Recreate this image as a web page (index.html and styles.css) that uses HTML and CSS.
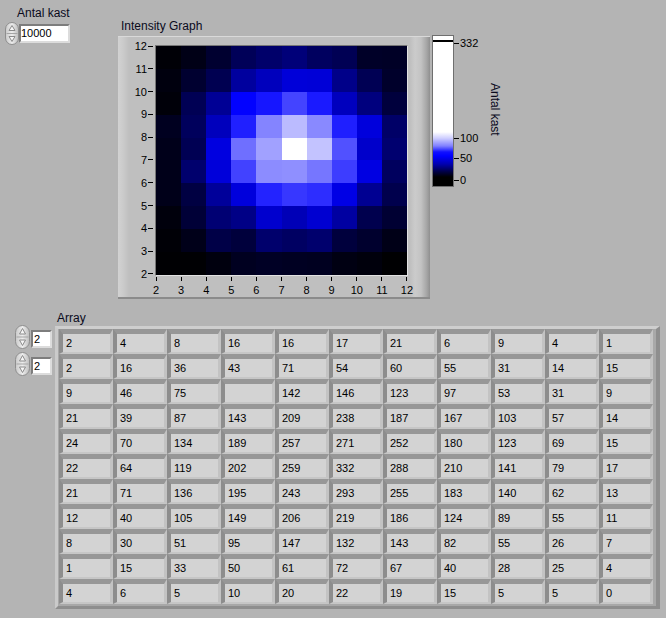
FILE: index.html
```html
<!DOCTYPE html>
<html>
<head>
<meta charset="utf-8">
<title>Intensity Graph</title>
<link rel="stylesheet" href="styles.css">
</head>
<body>
<div class="panel">
  <div class="top">
    <div class="antal">
      <div class="label antal-label">Antal kast</div>
      <div class="numctl">
        <svg class="spin" width="14" height="23" viewBox="0 0 14 23">
          <defs><linearGradient id="sg1" x1="0" x2="1"><stop offset="0" stop-color="#c9c9c9"/><stop offset="0.5" stop-color="#ededed"/><stop offset="1" stop-color="#bcbcbc"/></linearGradient></defs>
          <rect x="0.5" y="0.5" width="13" height="22" rx="6.5" fill="url(#sg1)" stroke="#8e8e8e"/>
          <line x1="1.5" y1="11.5" x2="12.5" y2="11.5" stroke="#a5a5a5"/>
          <path d="M7 3.5 L10 8.5 L4 8.5 Z" fill="#f6f6f6" stroke="#8a8a8a"/>
          <path d="M7 19.5 L10 14.5 L4 14.5 Z" fill="#f6f6f6" stroke="#8a8a8a"/>
        </svg>
        <div class="numbox wide">10000</div>
      </div>
    </div>

    <div class="graph-block">
      <div class="label graph-label">Intensity Graph</div>
      <div class="graph-frame">
        <div class="yaxis">
          <div class="yt"><span>12</span><i></i></div>
          <div class="yt"><span>11</span><i></i></div>
          <div class="yt"><span>10</span><i></i></div>
          <div class="yt"><span>9</span><i></i></div>
          <div class="yt"><span>8</span><i></i></div>
          <div class="yt"><span>7</span><i></i></div>
          <div class="yt"><span>6</span><i></i></div>
          <div class="yt"><span>5</span><i></i></div>
          <div class="yt"><span>4</span><i></i></div>
          <div class="yt"><span>3</span><i></i></div>
          <div class="yt"><span>2</span><i></i></div>
        </div>
        <div class="plot" id="plot"></div>
        <div class="xaxis">
          <div class="xt"><i></i><span>2</span></div>
          <div class="xt"><i></i><span>3</span></div>
          <div class="xt"><i></i><span>4</span></div>
          <div class="xt"><i></i><span>5</span></div>
          <div class="xt"><i></i><span>6</span></div>
          <div class="xt"><i></i><span>7</span></div>
          <div class="xt"><i></i><span>8</span></div>
          <div class="xt"><i></i><span>9</span></div>
          <div class="xt"><i></i><span>10</span></div>
          <div class="xt"><i></i><span>11</span></div>
          <div class="xt"><i></i><span>12</span></div>
        </div>
      </div>
    </div>

    <div class="ramp-block">
      <div class="ramp-bar"></div>
      <div class="ramp-scale">
        <div class="rt r332"><i></i><span>332</span></div>
        <div class="rt r100"><i></i><span>100</span></div>
        <div class="rt r50"><i></i><span>50</span></div>
        <div class="rt r0"><i></i><span>0</span></div>
      </div>
      <div class="ramp-title">Antal kast</div>
    </div>
  </div>

  <div class="array-section">
    <div class="indices">
      <div class="idx">
        <svg class="spin" width="15" height="24" viewBox="0 0 15 24">
          <defs><linearGradient id="sg2" x1="0" x2="1"><stop offset="0" stop-color="#c9c9c9"/><stop offset="0.5" stop-color="#ededed"/><stop offset="1" stop-color="#bcbcbc"/></linearGradient></defs>
          <rect x="0.5" y="0.5" width="14" height="23" rx="7" fill="url(#sg2)" stroke="#8e8e8e"/>
          <line x1="1.5" y1="12" x2="13.5" y2="12" stroke="#a5a5a5"/>
          <path d="M7.5 3.5 L10.5 9 L4.5 9 Z" fill="#f6f6f6" stroke="#8a8a8a"/>
          <path d="M7.5 20.5 L10.5 15 L4.5 15 Z" fill="#f6f6f6" stroke="#8a8a8a"/>
        </svg>
        <div class="numbox small">2</div>
      </div>
      <div class="idx">
        <svg class="spin" width="15" height="24" viewBox="0 0 15 24">
          <defs><linearGradient id="sg3" x1="0" x2="1"><stop offset="0" stop-color="#c9c9c9"/><stop offset="0.5" stop-color="#ededed"/><stop offset="1" stop-color="#bcbcbc"/></linearGradient></defs>
          <rect x="0.5" y="0.5" width="14" height="23" rx="7" fill="url(#sg3)" stroke="#8e8e8e"/>
          <line x1="1.5" y1="12" x2="13.5" y2="12" stroke="#a5a5a5"/>
          <path d="M7.5 3.5 L10.5 9 L4.5 9 Z" fill="#f6f6f6" stroke="#8a8a8a"/>
          <path d="M7.5 20.5 L10.5 15 L4.5 15 Z" fill="#f6f6f6" stroke="#8a8a8a"/>
        </svg>
        <div class="numbox small">2</div>
      </div>
    </div>
    <div class="array-main">
      <div class="label array-label">Array</div>
      <div class="array-frame">
        <div class="grid" id="grid">
          <div class="cell">2</div><div class="cell">4</div><div class="cell">8</div><div class="cell">16</div><div class="cell">16</div><div class="cell">17</div><div class="cell">21</div><div class="cell">6</div><div class="cell">9</div><div class="cell">4</div><div class="cell">1</div>
          <div class="cell">2</div><div class="cell">16</div><div class="cell">36</div><div class="cell">43</div><div class="cell">71</div><div class="cell">54</div><div class="cell">60</div><div class="cell">55</div><div class="cell">31</div><div class="cell">14</div><div class="cell">15</div>
          <div class="cell">9</div><div class="cell">46</div><div class="cell">75</div><div class="cell" data-v="100"></div><div class="cell">142</div><div class="cell">146</div><div class="cell">123</div><div class="cell">97</div><div class="cell">53</div><div class="cell">31</div><div class="cell">9</div>
          <div class="cell">21</div><div class="cell">39</div><div class="cell">87</div><div class="cell">143</div><div class="cell">209</div><div class="cell">238</div><div class="cell">187</div><div class="cell">167</div><div class="cell">103</div><div class="cell">57</div><div class="cell">14</div>
          <div class="cell">24</div><div class="cell">70</div><div class="cell">134</div><div class="cell">189</div><div class="cell">257</div><div class="cell">271</div><div class="cell">252</div><div class="cell">180</div><div class="cell">123</div><div class="cell">69</div><div class="cell">15</div>
          <div class="cell">22</div><div class="cell">64</div><div class="cell">119</div><div class="cell">202</div><div class="cell">259</div><div class="cell">332</div><div class="cell">288</div><div class="cell">210</div><div class="cell">141</div><div class="cell">79</div><div class="cell">17</div>
          <div class="cell">21</div><div class="cell">71</div><div class="cell">136</div><div class="cell">195</div><div class="cell">243</div><div class="cell">293</div><div class="cell">255</div><div class="cell">183</div><div class="cell">140</div><div class="cell">62</div><div class="cell">13</div>
          <div class="cell">12</div><div class="cell">40</div><div class="cell">105</div><div class="cell">149</div><div class="cell">206</div><div class="cell">219</div><div class="cell">186</div><div class="cell">124</div><div class="cell">89</div><div class="cell">55</div><div class="cell">11</div>
          <div class="cell">8</div><div class="cell">30</div><div class="cell">51</div><div class="cell">95</div><div class="cell">147</div><div class="cell">132</div><div class="cell">143</div><div class="cell">82</div><div class="cell">55</div><div class="cell">26</div><div class="cell">7</div>
          <div class="cell">1</div><div class="cell">15</div><div class="cell">33</div><div class="cell">50</div><div class="cell">61</div><div class="cell">72</div><div class="cell">67</div><div class="cell">40</div><div class="cell">28</div><div class="cell">25</div><div class="cell">4</div>
          <div class="cell">4</div><div class="cell">6</div><div class="cell">5</div><div class="cell">10</div><div class="cell">20</div><div class="cell">22</div><div class="cell">19</div><div class="cell">15</div><div class="cell">5</div><div class="cell">5</div><div class="cell">0</div>
        </div>
      </div>
    </div>
  </div>
</div>
<script src="script.js"></script>
</body>
</html>
```

FILE: styles.css
```css
* { box-sizing: border-box; margin: 0; padding: 0; }
html, body { margin: 0; background: #b4b4b4; }
body {
  font-family: "Liberation Sans", Arial, sans-serif;
  font-size: 12px;
  color: #000;
}
.panel { width: 666px; height: 618px; overflow: hidden; background: #b4b4b4; }

.label { font-size: 12px; line-height: 14px; height: 14px; white-space: nowrap; color: #0a0a1c; }

.top { display: flex; align-items: flex-start; height: 299px; }

/* Antal kast numeric control */
.antal { padding: 6px 0 0 5px; width: 70px; flex: none; }
.antal-label { padding-left: 12px; }
.numctl { display: flex; align-items: flex-start; margin-top: 2px; }
.spin { display: block; flex: none; }
.numbox {
  background: #fff;
  border: 2px solid;
  border-color: #7d7d7d #dcdcdc #dcdcdc #7d7d7d;
  font-size: 11px;
  line-height: 15px;
  padding-left: 1px;
  white-space: nowrap;
  color: #000;
}
.numbox.wide { width: 51px; height: 19px; margin-top: 2px; padding-left: 0; }

/* Intensity graph */
.graph-block { margin-left: 48px; padding-top: 19px; flex: none; }
.graph-label { padding-left: 3px; }
.graph-frame {
  margin-top: 3px;
  width: 312px;
  height: 263px;
  display: grid;
  grid-template-columns: 37px 253px;
  grid-template-rows: 231px 1fr;
  padding-top: 8px;
  border-top: 1px solid #d9d9d9;
  border-bottom: 2px solid #8b8b8b;
  background: linear-gradient(to right, #d2d2d2 0, #cbcbcb 5px, #bfbfbf 11px, #bfbfbf 292px, #cbcbcb 297px, #c3c3c3 303px, #a4a4a4 309px, #8f8f8f 312px);
}
.yaxis {
  grid-column: 1; grid-row: 1;
  align-self: start;
  margin-top: -6px;
  height: 242px;
  display: flex; flex-direction: column; justify-content: space-between;
}
.yt { height: 14px; display: flex; align-items: center; justify-content: flex-end; font-size: 11px; line-height: 14px; }
.yt i { display: block; width: 5px; height: 1px; background: #000; margin: 0 2px 0 1px; }
.plot {
  grid-column: 2; grid-row: 1;
  border: 1px solid;
  border-color: #777 #e2e2e2 #e2e2e2 #777;
  display: grid;
  grid-template-columns: repeat(10, 1fr);
  grid-template-rows: repeat(10, 1fr);
  background: #000;
}
.xaxis {
  grid-column: 2; grid-row: 2;
  justify-self: start; align-self: start;
  margin-left: -11.5px;
  width: 276px;
  display: grid;
  grid-template-columns: repeat(11, 1fr);
}
.xt { display: flex; flex-direction: column; align-items: center; font-size: 11px; line-height: 14px; }
.xt i { display: block; width: 1px; height: 4px; background: #000; margin: 1px 0 2px; }

/* Color ramp */
.ramp-block { display: flex; align-items: flex-start; margin-left: 2px; padding-top: 35px; flex: none; }
.ramp-bar {
  width: 22px; height: 152px;
  border: 1px solid #6f6f6f;
  background: linear-gradient(to bottom,
    #fff 0, #fff 4px, #000 4px, #000 6px, #fff 6px, #fff 96px,
    #d0d0ff 102px, #8080ff 110px, #1010ff 116px, #0000ff 120px,
    #0000b0 128px, #000040 136px, #000 141px, #000 100%);
}
.ramp-scale { display: flex; flex-direction: column; width: 26px; }
.rt { height: 14px; display: flex; align-items: center; font-size: 11px; line-height: 14px; }
.rt i { display: block; width: 5px; height: 1px; background: #000; margin-right: 1px; }
.r332 { margin-top: 1px; }
.r100 { margin-top: 81px; }
.r50 { margin-top: 6px; }
.r0 { margin-top: 8px; }
.ramp-title {
  writing-mode: vertical-rl;
  margin-left: 8px;
  margin-top: 48px;
  font-size: 12px;
  line-height: 14px;
  white-space: nowrap;
  color: #0a0a1c;
}

/* Array */
.array-section { display: flex; align-items: flex-start; padding-top: 12px; }
.indices { margin-left: 15px; width: 37px; padding-top: 14px; display: flex; flex-direction: column; gap: 3px; flex: none; }
.idx { display: flex; align-items: flex-end; height: 24px; }
.numbox.small { width: 21px; height: 18px; margin-bottom: 1px; margin-left: 1px; line-height: 14px; }
.array-main { margin-left: 3px; }
.array-label { padding-left: 2px; }
.array-frame {
  margin-top: 1px;
  width: 605px; height: 283px;
  border-style: solid;
  border-width: 3px 4px 3px 3px;
  border-color: #cecece #8e8e8e #8e8e8e #cacaca;
  padding: 0 3px 2px 1px;
  background: #a8a8a8;
}
.grid { display: grid; grid-template-columns: repeat(11, 54px); grid-auto-rows: 25px; }
.cell {
  border-style: solid;
  border-width: 5px 3px 2px 4px;
  border-color: #979797 #c3c3c3 #c6c6c6 #8d8d8d;
  background: #d3d3d3;
  font-size: 11px;
  line-height: 18px;
  padding-left: 3px;
  white-space: nowrap;
  overflow: hidden;
  color: #000;
}
.px { min-width: 0; min-height: 0; }
```

FILE: script.js
```js
(function () {
  var cells = document.querySelectorAll('#grid .cell');
  function val(r, c) {
    var el = cells[(r - 2) * 11 + (c - 2)];
    var t = el.getAttribute('data-v') || el.textContent;
    return parseFloat(t) || 0;
  }
  function color(v) {
    if (v <= 166) {
      return 'rgb(0,0,' + Math.round(v / 166 * 255) + ')';
    }
    var w = Math.min(255, Math.round((v - 166) / 166 * 255));
    return 'rgb(' + w + ',' + w + ',255)';
  }
  var plot = document.getElementById('plot');
  for (var y = 11; y >= 2; y--) {
    for (var x = 2; x <= 11; x++) {
      var d = document.createElement('div');
      d.className = 'px';
      d.style.background = color(val(x, y));
      plot.appendChild(d);
    }
  }
})();
```
